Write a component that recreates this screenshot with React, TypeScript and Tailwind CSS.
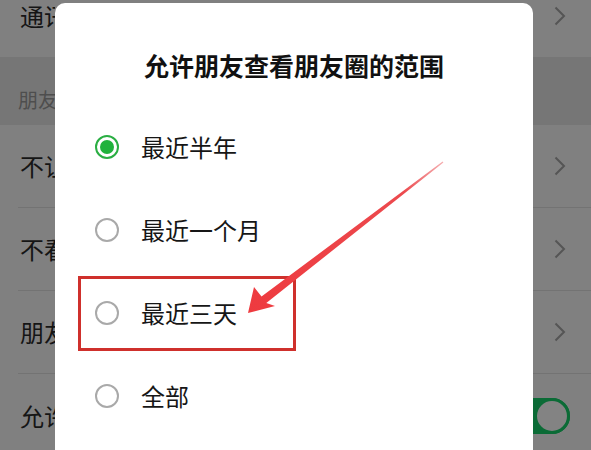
import React from "react";

const font = { fontFamily: '"Noto Sans CJK SC", "Noto Sans", sans-serif' };

const rows = [
  { label: "不让他（她）看我的朋友圈", kind: "chevron" },
  { label: "不看他（她）的朋友圈", kind: "chevron" },
  { label: "朋友圈动态", kind: "chevron" },
  { label: "允许陌生人查看十条朋友圈", kind: "switch" },
];

const options = [
  { label: "最近半年", checked: true },
  { label: "最近一个月", checked: false },
  { label: "最近三天", checked: false },
  { label: "全部", checked: false },
];

function Chevron() {
  return (
    <svg width="12" height="20" viewBox="0 0 12 20" className="shrink-0">
      <polyline points="1.5,1.5 10,10 1.5,18.5" fill="none" stroke="#555555" strokeWidth="2" />
    </svg>
  );
}

function Switch() {
  return (
    <div className="flex h-[36px] w-[56px] items-center justify-end rounded-full bg-[#0b6b36]">
      <div className="h-[36px] w-[36px] rounded-full border-[3px] border-[#0b6b36] bg-[#838383]" />
    </div>
  );
}

function Radio({ checked }: { checked: boolean }) {
  if (checked) {
    return (
      <div className="flex h-[24px] w-[24px] shrink-0 items-center justify-center rounded-full border-[2px] border-[#2aae43]">
        <div className="h-[14px] w-[14px] rounded-full bg-[#20b23c]" />
      </div>
    );
  }
  return <div className="h-[24px] w-[24px] shrink-0 rounded-full border-[2px] border-[#a9a9a9]" />;
}

function Arrow() {
  return (
    <svg className="pointer-events-none absolute left-0 top-0" width="591" height="450" viewBox="0 0 591 450">
      <defs>
        <linearGradient id="arrowFade" x1="443" y1="162" x2="248" y2="312" gradientUnits="userSpaceOnUse">
          <stop offset="0" stopColor="#f5b0b2" />
          <stop offset="0.2" stopColor="#ec4a4e" />
          <stop offset="1" stopColor="#ee3a3f" />
        </linearGradient>
      </defs>
      <polygon
        points="248,313 254,287 261.5,296.6 442.6,161.4 443.4,162.6 266.3,303 275,306"
        fill="url(#arrowFade)"
      />
    </svg>
  );
}

export default function App() {
  return (
    <div className="relative h-[450px] w-[591px] overflow-hidden bg-[#808080]" style={font}>
      {/* background settings list, mostly hidden by the dialog */}
      <div className="-mt-[26px] flex flex-col">
        <div className="flex h-[83px] items-center justify-between pl-[20px] pr-[25px]">
          <span className="w-[35px] overflow-hidden whitespace-nowrap text-[24px] text-[#151515]">通讯录</span>
          <Chevron />
        </div>
        <div className="flex h-[68px] items-end bg-[#767676] pb-[10px] pl-[18px]">
          <span className="w-[37px] overflow-hidden whitespace-nowrap text-[20px] text-[#4e4e4e]">朋友圈</span>
        </div>
        {rows.map((r, i) => (
          <div key={r.label} className="pl-[18px]">
            <div
              className={
                "flex h-[83px] items-center justify-between pl-[2px] " +
                (r.kind === "switch" ? "pr-[21px] " : "pr-[25px] ") +
                (i < rows.length - 1 ? "border-b border-[#737373]" : "")
              }
            >
              <span className="w-[35px] overflow-hidden whitespace-nowrap text-[24px] text-[#151515]">{r.label}</span>
              {r.kind === "switch" ? <Switch /> : <Chevron />}
            </div>
          </div>
        ))}
      </div>

      {/* dialog */}
      <div className="absolute left-[55px] top-[3px] h-[480px] w-[478px] rounded-[10px] bg-white">
        <div className="h-[102px] pt-[49px] text-center text-[25px] font-bold leading-[27px] text-[#111111]">
          允许朋友查看朋友圈的范围
        </div>
        {options.map((o) => (
          <div key={o.label} className="flex h-[83px] items-center gap-[22px] pl-[40px]">
            <Radio checked={o.checked} />
            <span className="text-[24px] text-[#161616]">{o.label}</span>
          </div>
        ))}
      </div>

      {/* annotation */}
      <div className="absolute left-[78px] top-[276px] h-[75px] w-[218px] border-[3px] border-[#cf302c]" />
      <Arrow />
    </div>
  );
}
